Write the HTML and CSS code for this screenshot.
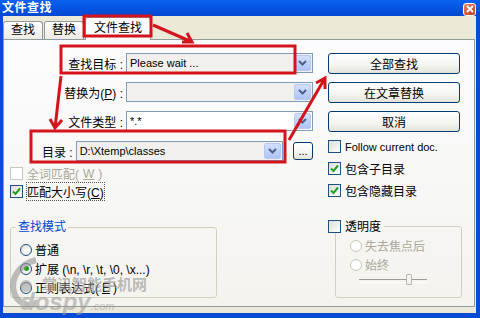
FILE: index.html
```html
<!DOCTYPE html>
<html>
<head>
  <meta charset="UTF-8">
  <title>文件查找</title>
  <link rel="stylesheet" href="styles.css">
</head>
<body>

<div class="window">
  <div class="titlebar">
    <span class="title">文件查找</span>
    <span class="close"><svg width="8" height="8" viewBox="0 0 8 8"><path d="M1 1L7 7M7 1L1 7" stroke="#fff" stroke-width="1.8"/></svg></span>
  </div>

  <div class="client">
    <div class="tabs">
      <div class="tab">查找</div>
      <div class="tab">替换</div>
      <div class="tab active">文件查找</div>
    </div>

    <div class="page">
      <div class="upper">
        <div class="form">
          <div class="row">
            <label>查找目标 :</label>
            <div class="combo"><span class="val">Please wait ...</span><span class="drop"><svg width="9" height="6" viewBox="0 0 9 6"><path d="M1 1L4.5 4.5L8 1" fill="none" stroke="#4D6185" stroke-width="2"/></svg></span></div>
          </div>
          <div class="row">
            <label>替换为(<u>P</u>) :</label>
            <div class="combo"><span class="val"></span><span class="drop"><svg width="9" height="6" viewBox="0 0 9 6"><path d="M1 1L4.5 4.5L8 1" fill="none" stroke="#4D6185" stroke-width="2"/></svg></span></div>
          </div>
          <div class="row">
            <label>文件类型 :</label>
            <div class="combo white"><span class="val">*.*</span><span class="drop"><svg width="9" height="6" viewBox="0 0 9 6"><path d="M1 1L4.5 4.5L8 1" fill="none" stroke="#4D6185" stroke-width="2"/></svg></span></div>
          </div>
          <div class="row dir">
            <label>目录 :</label>
            <div class="combo"><span class="val">D:\Xtemp\classes</span><span class="drop"><svg width="9" height="6" viewBox="0 0 9 6"><path d="M1 1L4.5 4.5L8 1" fill="none" stroke="#4D6185" stroke-width="2"/></svg></span></div>
            <button class="btn browse">...</button>
          </div>

          <div class="checks">
            <div class="check disabled"><span class="box"></span>全词匹配(<u>W</u>)</div>
            <div class="check"><span class="box"><svg width="9" height="9" viewBox="0 0 9 9"><path d="M1 4.5L3.5 7L8 1.5" fill="none" stroke="#21A121" stroke-width="2"/></svg></span><span class="focus">匹配大小写(<u>C</u>)</span></div>
          </div>
        </div>

        <div class="side">
          <button class="btn">全部查找</button>
          <button class="btn">在文章替换</button>
          <button class="btn">取消</button>
          <div class="check"><span class="box"></span><span class="latin">Follow current doc.</span></div>
          <div class="check"><span class="box"><svg width="9" height="9" viewBox="0 0 9 9"><path d="M1 4.5L3.5 7L8 1.5" fill="none" stroke="#21A121" stroke-width="2"/></svg></span>包含子目录</div>
          <div class="check"><span class="box"><svg width="9" height="9" viewBox="0 0 9 9"><path d="M1 4.5L3.5 7L8 1.5" fill="none" stroke="#21A121" stroke-width="2"/></svg></span>包含隐藏目录</div>
        </div>
      </div>

      <div class="lower">
        <fieldset class="group mode">
          <legend>查找模式</legend>
          <div class="radios">
            <div class="radio"><span class="dot"></span>普通</div>
            <div class="radio"><span class="dot on"></span>扩展 (\n, \r, \t, \0, \x...)</div>
            <div class="radio"><span class="dot"></span>正则表达式(<u>E</u>)</div>
          </div>
        </fieldset>

        <fieldset class="group trans">
          <legend><span class="check"><span class="box"></span>透明度</span></legend>
          <div class="radios off">
            <div class="radio"><span class="dot"></span>失去焦点后</div>
            <div class="radio"><span class="dot"></span>始终</div>
            <div class="slider"><span class="thumb"></span></div>
          </div>
        </fieldset>
      </div>
    </div>
  </div>

  <svg class="marks" width="480" height="318" viewBox="0 0 480 318">
    <g fill="none" stroke="#D3141C" stroke-width="3">
      <rect x="84" y="16" width="67" height="20"/>
      <rect x="61" y="46" width="234" height="27"/>
      <rect x="31" y="131" width="254" height="31"/>
      <path d="M153 25L192 42M182 42L192 42L187 33"/>
      <path d="M61 76L55 128M50 119L55 128L62 120"/>
      <path d="M289 140L325 78M316 83L325 78L325 89"/>
    </g>
  </svg>

  <div class="watermark">
    <svg class="wm-logo" width="36" height="56" viewBox="0 0 36 56"><path d="M30 4C14 8 4 22 8 36C11 48 24 52 32 46" fill="none" stroke="#8E8E8E" stroke-width="6"/><circle cx="20" cy="30" r="6" fill="#9C9C9C"/></svg>
    <span class="wm-cn">掌讯智能手机网</span>
    <span class="wm-en">dospy<small>.com</small></span>
  </div>
</div>

</body>
</html>
```

FILE: styles.css
```css
* { box-sizing: border-box; }
body {
  margin: 0;
  font-family: "Liberation Sans", "Noto Sans CJK SC", sans-serif;
  font-size: 12px;
  color: #000;
}
.window {
  position: relative;
  width: 480px;
  height: 318px;
  overflow: hidden;
  background: #0A4BD6;
  display: flex;
  flex-direction: column;
}
.titlebar {
  height: 16px;
  flex: none;
  display: flex;
  align-items: center;
  justify-content: space-between;
  padding: 0 4px 0 2px;
  background: linear-gradient(#0B62F2, #0656E6 40%, #0349D2);
  color: #fff;
}
.title { font-weight: bold; line-height: 14px; letter-spacing: 0.5px; }
.close {
  width: 13px;
  height: 13px;
  margin-top: 2px;
  border: 1px solid #fff;
  border-radius: 3px;
  background: linear-gradient(135deg, #E8876B, #D45733 60%, #C24523);
  display: flex;
  align-items: center;
  justify-content: center;
}
.client {
  flex: 1;
  margin: 0 4px 5px 3px;
  background: #ECE9D8;
  display: flex;
  flex-direction: column;
}
.tabs {
  height: 23px;
  flex: none;
  display: flex;
  align-items: flex-end;
}
.tab {
  height: 18px;
  padding: 0 7px;
  margin-right: 1px;
  border: 1px solid #919B9C;
  border-bottom: 0;
  border-radius: 3px 3px 0 0;
  background: linear-gradient(#FFFFFF, #ECEBE6);
  line-height: 17px;
}
.tab.active {
  height: 23px;
  padding: 0 8px;
  margin-bottom: -1px;
  position: relative;
  background: #FCFCFE;
  line-height: 20px;
}
.page {
  flex: 1;
  margin: 0 1px 6px 0;
  border: 1px solid #919B9C;
  background: linear-gradient(#FCFCFE, #F4F3EE);
}
.upper { display: flex; padding-top: 13px; }
.form { width: 309px; }
.row {
  display: flex;
  align-items: center;
  height: 20px;
  margin-bottom: 9px;
}
.row label {
  width: 122px;
  padding-right: 3px;
  text-align: right;
  white-space: nowrap;
}
.combo {
  width: 187px;
  height: 20px;
  padding: 1px;
  border: 1px solid #7F9DB9;
  background: #F1F0EC;
  display: flex;
  align-items: center;
  justify-content: space-between;
}
.combo.white { background: #fff; }
.combo .val { padding-left: 2px; font-size: 11px; }
.drop {
  width: 17px;
  height: 16px;
  border: 1px solid #B6C9F4;
  border-radius: 2px;
  background: linear-gradient(#D2DFFD, #AEC4F6);
  display: flex;
  align-items: center;
  justify-content: center;
}
.row.dir { margin: 10px 0 0; }
.dir label { width: auto; margin: 0 3px 0 38px; padding: 0; }
.dir .combo { width: 208px; }
.btn {
  display: block;
  width: 132px;
  height: 21px;
  margin: 0 0 8px;
  padding: 0;
  border: 1px solid #003C74;
  border-radius: 3px;
  background: linear-gradient(#FFFFFF, #F4F4F0 60%, #E3E2DA);
  font: inherit;
  color: #000;
}
.btn.browse {
  width: 20px;
  height: 18px;
  margin: 0 0 0 10px;
  font-size: 11px;
  line-height: 12px;
}
.checks { padding-left: 6px; margin-top: 6px; }
.check {
  display: flex;
  align-items: center;
  height: 13px;
  gap: 4px;
  white-space: nowrap;
}
.checks .check + .check { margin-top: 5px; }
.box {
  width: 13px;
  height: 13px;
  flex: none;
  border: 1px solid #1C5180;
  background: linear-gradient(135deg, #DCDCD7, #FFFFFF);
  display: flex;
  align-items: center;
  justify-content: center;
}
.check.disabled { color: #ACA899; }
.check.disabled .box { border-color: #CAC8BB; background: #fff; }
.focus { outline: 1px dotted #555; outline-offset: 0; }
.latin { font-size: 11px; }
.side { width: 132px; margin-left: 15px; }
.side .check:first-of-type { margin-top: 3px; }
.side .check + .check { margin-top: 9px; }
.lower { display: flex; margin-top: 22px; }
.group {
  margin: 0;
  padding: 0;
  border: 1px solid #D0D0BF;
  border-radius: 3px;
  height: 78px;
}
.group legend { padding: 0 2px; line-height: 14px; }
.mode { margin-left: 6px; width: 207px; padding-left: 5px; }
.mode legend { color: #0046D5; }
.radios { padding: 9px 0 0 4px; }
.radio {
  display: flex;
  align-items: center;
  height: 13px;
  gap: 3px;
  white-space: nowrap;
}
.radio + .radio { margin-top: 6px; }
.dot {
  width: 12px;
  height: 12px;
  border: 1px solid #1C5180;
  border-radius: 50%;
  background: radial-gradient(circle at 60% 60%, #FFFFFF, #DCDCD7);
  display: flex;
  align-items: center;
  justify-content: center;
}
.dot.on::after {
  content: "";
  width: 5px;
  height: 5px;
  border-radius: 50%;
  background: #21A121;
}
.trans { margin-left: 118px; width: 127px; }
.trans legend { margin-left: -8px; padding: 0 3px 0 0; }
.trans .radios { padding: 6px 0 0 14px; color: #ACA899; }
.trans .dot { border-color: #CAC8BB; background: #fff; }
.slider {
  position: relative;
  width: 68px;
  height: 12px;
  margin: 3px 0 0 9px;
}
.slider::before {
  content: "";
  position: absolute;
  left: 0;
  right: 0;
  top: 5px;
  height: 2px;
  border-top: 1px solid #9D9C99;
  border-bottom: 1px solid #fff;
}
.thumb {
  position: absolute;
  left: 47px;
  top: 0;
  width: 6px;
  height: 11px;
  border: 1px solid #B9B8B0;
  border-radius: 1px;
  background: #F4F3EE;
}
.marks { position: absolute; left: 0; top: 0; pointer-events: none; }
.watermark {
  position: absolute;
  left: 4px;
  top: 254px;
  width: 160px;
  height: 64px;
  pointer-events: none;
  opacity: 0.55;
}
.wm-logo { position: absolute; left: 2px; top: 2px; }
.wm-cn {
  position: absolute;
  left: 38px;
  top: 19px;
  font-size: 15px;
  font-weight: bold;
  color: #8A8A8A;
  text-shadow: 0 0 2px #fff;
}
.wm-en {
  position: absolute;
  left: 16px;
  top: 34px;
  font-family: "Liberation Sans", sans-serif;
  font-size: 24px;
  font-style: italic;
  font-weight: bold;
  color: #9A9A9A;
}
.wm-en small { font-size: 11px; font-weight: normal; }
```
